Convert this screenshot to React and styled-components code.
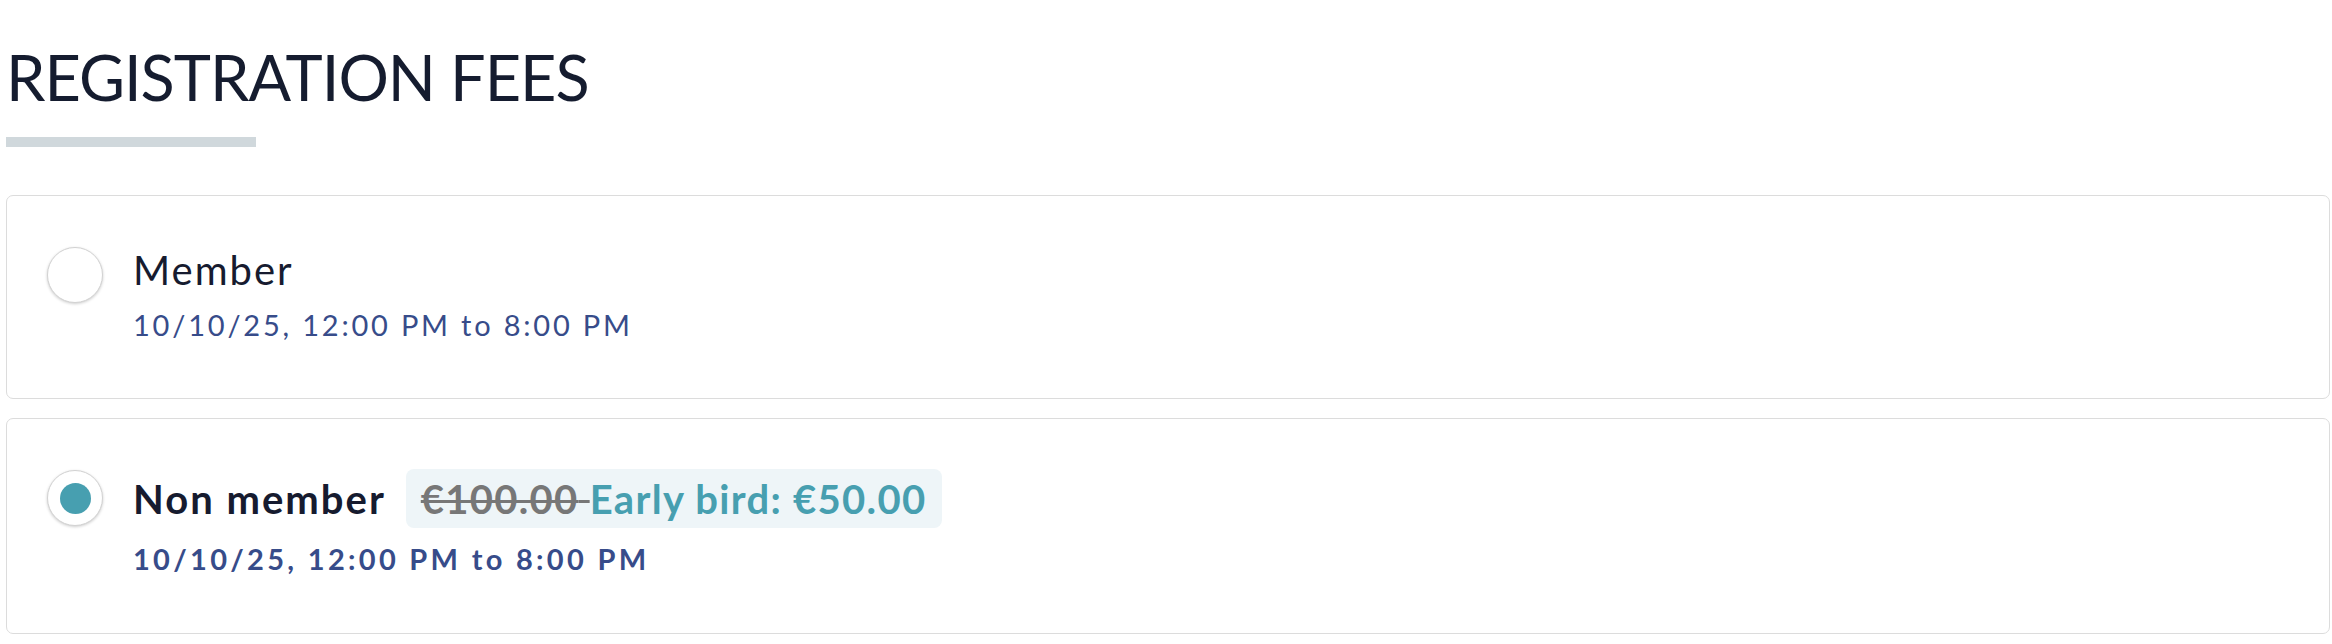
import React from "react";
import styled, { createGlobalStyle } from "styled-components";

const GlobalStyle = createGlobalStyle`
  html, body { margin: 0; padding: 0; background: #ffffff; }
  body { font-family: Lato, "Noto Sans", sans-serif; }
`;

const Page = styled.div`
  padding: 0 2px 0 6px;
  font-family: Lato, "Noto Sans", sans-serif;
`;

const Title = styled.h2`
  margin: 39px 0 0;
  font-size: 63px;
  line-height: 1.2;
  font-weight: 400;
  color: #151c2f;
  letter-spacing: -1px;
`;

const Underline = styled.div`
  margin-top: 22px;
  width: 250px;
  height: 10px;
  background: #d0d8dc;
`;

const List = styled.div`
  margin-top: 48px;
  display: flex;
  flex-direction: column;
  gap: 19px;
`;

const Card = styled.label`
  display: flex;
  align-items: flex-start;
  gap: 30px;
  padding: 50px 40px 56px;
  border: 1px solid #dcdcdc;
  border-radius: 7px;
  background: #fff;
  cursor: pointer;
`;

const Radio = styled.span`
  flex: none;
  margin-top: 1px;
  width: 56px;
  height: 56px;
  box-sizing: border-box;
  border-radius: 50%;
  border: 1.5px solid #d2d2d2;
  box-shadow: 0 1px 3px rgba(0, 0, 0, 0.2);
  background: #fff;
  display: flex;
  align-items: center;
  justify-content: center;
`;

const Dot = styled.span`
  width: 31px;
  height: 31px;
  border-radius: 50%;
  background: #479fb0;
`;

const Content = styled.div`
  display: flex;
  flex-direction: column;
`;

const TitleLine = styled.div`
  display: flex;
  align-items: center;
  gap: 20px;
`;

const Name = styled.span`
  font-size: 40px;
  line-height: 48px;
  font-weight: ${(p) => (p.$selected ? 700 : 400)};
  letter-spacing: 2px;
  color: #161b2f;
`;

const Badge = styled.span`
  display: inline-flex;
  align-items: center;
  padding: 5.5px 16px 5.5px 15px;
  border-radius: 8px;
  background: #eef5f8;
  font-size: 40px;
  line-height: 48px;
  font-weight: 700;
  letter-spacing: 1.3px;
  color: #479fb0;
  white-space: pre;
`;

const OldPrice = styled.s`
  color: #777777;
  text-decoration-thickness: 3px;
`;

const DateText = styled.div`
  margin-top: 14px;
  font-size: 29px;
  line-height: 1.2;
  font-weight: ${(p) => (p.$selected ? 700 : 400)};
  letter-spacing: ${(p) => (p.$selected ? "3.3px" : "2.8px")};
  color: #374c8a;
`;

const fees = [
  { id: "member", name: "Member", date: "10/10/25, 12:00 PM to 8:00 PM" },
  {
    id: "non-member",
    name: "Non member",
    date: "10/10/25, 12:00 PM to 8:00 PM",
    oldPrice: "€100.00",
    earlyBird: "Early bird: €50.00",
    selected: true,
  },
];

export default function App() {
  return (
    <Page>
      <GlobalStyle />
      <Title>REGISTRATION FEES</Title>
      <Underline />
      <List>
        {fees.map((f) => (
          <Card key={f.id}>
            <Radio>{f.selected && <Dot />}</Radio>
            <Content>
              <TitleLine>
                <Name $selected={f.selected}>{f.name}</Name>
                {f.earlyBird && (
                  <Badge>
                    <OldPrice>{f.oldPrice} </OldPrice>
                    {f.earlyBird}
                  </Badge>
                )}
              </TitleLine>
              <DateText $selected={f.selected}>{f.date}</DateText>
            </Content>
          </Card>
        ))}
      </List>
    </Page>
  );
}
